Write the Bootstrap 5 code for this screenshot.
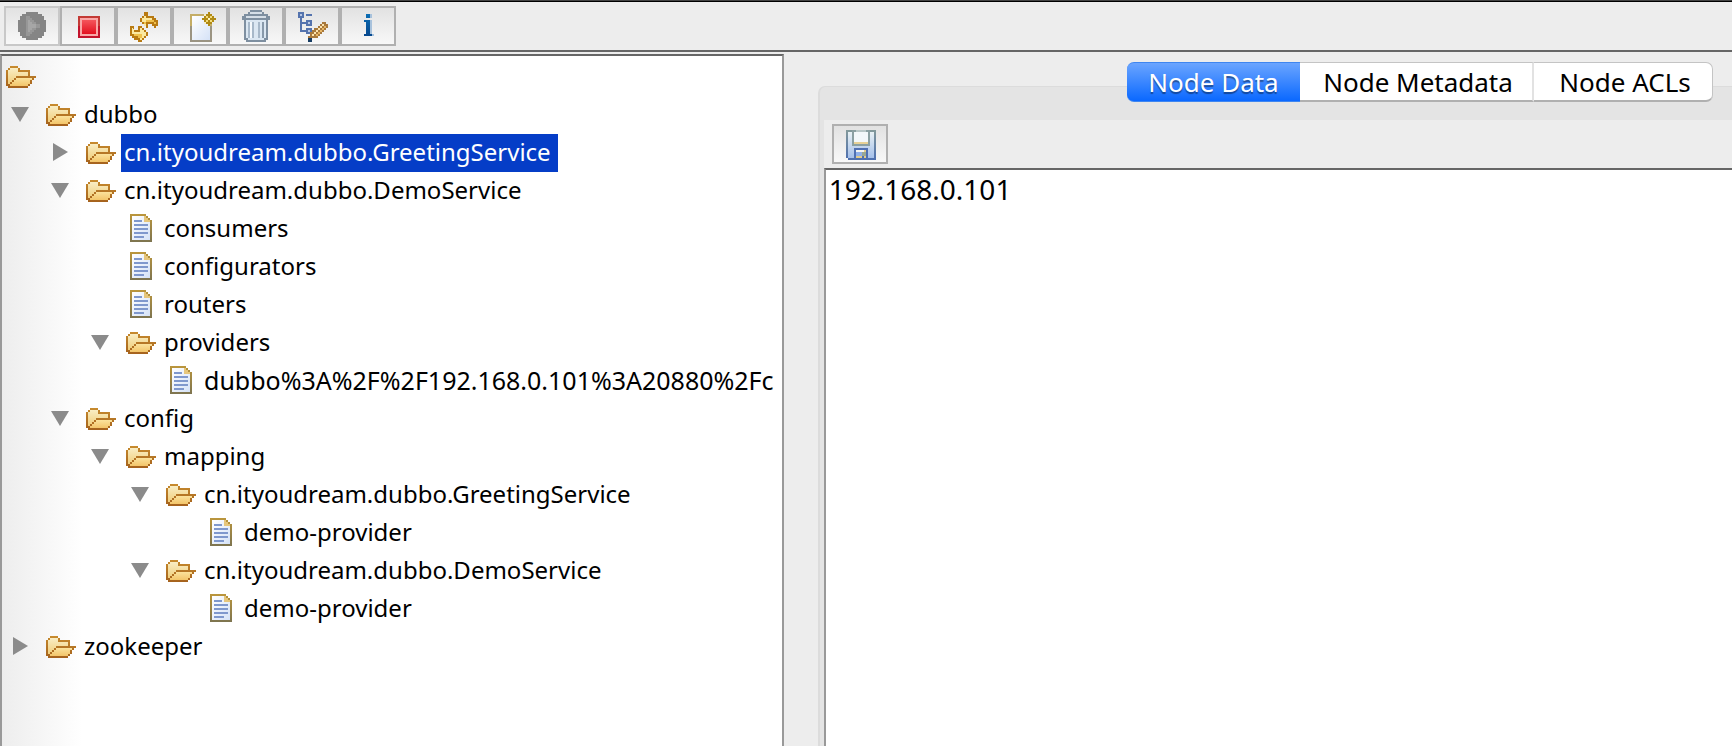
<!DOCTYPE html>
<html lang="en">
<head>
<meta charset="utf-8">
<meta name="viewport" content="width=device-width, initial-scale=1">
<title>ZooInspector</title>
<link href="https://cdn.jsdelivr.net/npm/bootstrap@5.3.0/dist/css/bootstrap.min.css" rel="stylesheet">
<style>
  body { font-family: "Noto Sans", "Open Sans", sans-serif; font-size: 24px; line-height: 38px; color: #000; background: #ededed; }
  .topbar { border-top: 1px solid #444; border-bottom: 2px solid #666; background: #ededed; box-shadow: inset 0 1px 0 #000; padding: 5px 4px 4px; }
  .tool { width: 56px; height: 40px; padding: 0; border: 2px solid #b0b0b0; border-radius: 0; background: linear-gradient(#e2e2e2, #f8f8f8); }
  .tool:disabled { border-color: #c8c8c8; opacity: 1; }
  .px { width: 32px; height: 32px; display: block; flex: none; shape-rendering: crispEdges; }
  .main-split { padding-top: 2px; }
  .tree-pane { flex: 0 0 45.25%; border: 2px solid #999; border-top-color: #666; border-bottom: 0; background: linear-gradient(90deg, #ededed, #fff 80px); padding: 2px 2px 0 4px; }
  .tree-pane ul { list-style: none; margin: 0; padding: 0; }
  .tree-pane li ul { padding-left: 40px; }
  .node { height: 38px; }
  .node .px { margin: 2px 3px 4px 0; }
  .toggle { flex: none; width: 40px; height: 38px; padding: 0 0 0 5px; border: 0; background: none; }
  .toggle svg { display: block; width: 22px; height: 20px; }
  .caption { padding: 0 7px 0 3px; line-height: 36px; white-space: nowrap; }
  .caption.selected { background: #053dc7; color: #fff; }
  .caption.encoded { padding-right: 0; font-size: 25px; }
  .divider { flex: 0 0 34px; }
  .tab-pane-box { margin-top: 32px; border: 2px solid #dcdcdc; border-width: 1px 0 0 2px; border-radius: 7px 0 0 0; background: #e4e4e4; padding-left: 4px; }
  .tabs { margin: -25px 19px 18px 0; }
  .tabs .nav-link { height: 40px; padding: 0; font-size: 26px; line-height: 38px; color: #000; background: #fff; border: 1px solid #c4c4c4; border-bottom: 2px solid #b0b0b0; border-left: 0; border-radius: 0; white-space: nowrap; }
  .tabs .nav-link.active { width: 173px; color: #fff; text-shadow: 0 2px 1px #0006; background: linear-gradient(#6ba5ff, #0a68ff); border: 1px solid #3f86f0; border-width: 1px 0; border-radius: 7px 0 0 7px; }
  .tabs .wide { width: 234px; padding-left: 4px; border-right: 2px solid #e2e2e2; }
  .tabs .last { width: 179px; padding-left: 4px; border-radius: 0 7px 7px 0; }
  .data-bar { background: #ededed; padding: 4px 8px; }
  .data-text { border: 0; border-top: 2px solid #666; border-left: 2px solid #999; border-radius: 0; padding: 0 3px; font-size: 28px; line-height: 38px; color: #000; resize: none; background: #fff; }
  .data-text:focus { box-shadow: none; border-color: #666; }
</style>
</head>
<body class="vh-100 d-flex flex-column overflow-hidden">

<svg class="position-absolute" width="0" height="0" aria-hidden="true">
  <defs>
    <linearGradient id="gFold" x1="0" y1="0" x2="0" y2="1"><stop offset="0" stop-color="#f9edc4"/><stop offset="1" stop-color="#f0cb72"/></linearGradient>
    <linearGradient id="gFlap" x1="0" y1="0" x2="0" y2="1"><stop offset="0" stop-color="#fbe29c"/><stop offset="1" stop-color="#f3c56a"/></linearGradient>
    <linearGradient id="gEdge" x1="0" y1="0" x2="0" y2="1"><stop offset="0" stop-color="#c78b2e"/><stop offset="1" stop-color="#a5621d"/></linearGradient>
    <linearGradient id="gDocEdge" x1="0" y1="0" x2="0" y2="1"><stop offset="0" stop-color="#bb963c"/><stop offset="1" stop-color="#7d7450"/></linearGradient>
    <linearGradient id="gPage" x1="0" y1="0" x2="1" y2="1"><stop offset="0" stop-color="#fff"/><stop offset="1" stop-color="#d5e2f7"/></linearGradient>
    <linearGradient id="gRed" x1="0" y1="0" x2="0" y2="1"><stop offset="0" stop-color="#f4555c"/><stop offset="1" stop-color="#e3101f"/></linearGradient>
    <linearGradient id="gBlue" x1="0" y1="0" x2="0" y2="1"><stop offset="0" stop-color="#0b6db4"/><stop offset="1" stop-color="#06478d"/></linearGradient>
    <linearGradient id="gDisk" x1="0" y1="0" x2="0" y2="1"><stop offset="0" stop-color="#e8f1f4"/><stop offset="1" stop-color="#a5c0ea"/></linearGradient>
    <linearGradient id="gDiskEdge" x1="0" y1="0" x2="0" y2="1"><stop offset="0" stop-color="#849a9b"/><stop offset="1" stop-color="#4d6fb0"/></linearGradient>
    <symbol id="folder" viewBox="0 0 16 16">
      <path fill="url(#gFold)" d="M2 4h4v1h1v1h4v3H5v1H4v1H3v1H2v1H1V5h1z"/>
      <path fill="url(#gFlap)" d="M5 9h9v1h-1v1h-1v1h-1v1H2v-1h1v-1h1v-1h1z"/>
      <path fill="url(#gEdge)" d="M2 3h4v1H2zM1 4h1v1H1zM6 4h1v1H6zM0 5h1v8H0zM6 5h6v3h-1V6H6zM5 8h10v1h-1v1h-1V9H5zM4 9h1v1H4zM3 10h1v1H3zM12 10h1v1h-1zM2 11h1v1H2zM12 11h1v1h-1zM1 12h1v1H1zM11 12h1v1h-1zM1 13h10v1H1z"/>
    </symbol>
    <symbol id="doc" viewBox="0 0 16 16">
      <path fill="url(#gDocEdge)" d="M2 1h8v1h1v1h1v1h1v11H2z"/>
      <path fill="url(#gPage)" d="M3 2h6v3h3v9H3z"/>
      <path fill="#e6c67c" d="M9 2h1v1h1v1h1v1H9z"/>
      <path fill="#7f98cd" d="M4 4h4v1H4zM4 6h7v1H4zM4 8h7v1H4zM4 10h7v1H4zM4 12h5v1H4z"/>
    </symbol>
    <symbol id="down" viewBox="0 0 22 20"><path fill="#8b8b8b" d="M0 2h18L9 17z"/></symbol>
    <symbol id="right" viewBox="0 0 22 20"><path fill="#8b8b8b" d="M2 0l15 9-15 9z"/></symbol>
  </defs>
</svg>

<header class="topbar d-flex" role="toolbar" aria-label="Main toolbar">
  <button class="tool btn d-flex justify-content-center align-items-center" type="button" disabled aria-label="Connect">
    <svg class="px" viewBox="0 0 16 16"><path fill="#858585" d="M5 1h6v1h2v1h1v2h1v6h-1v2h-1v1h-2v1H5v-1H3v-1H2v-2H1V5h1V3h1V2h2z"/><path fill="#979797" d="M5 3h2v1h1v1h1v1h1v1h2v2h-2v1H9v1H8v1H7v1H5z"/><path fill="#a6a6a6" d="M6 5h1v1h1v1h2v2H8v1H7v1H6z"/></svg>
  </button>
  <button class="tool btn d-flex justify-content-center align-items-center" type="button" aria-label="Disconnect">
    <svg class="px" viewBox="0 0 16 16"><path fill="#c33a35" d="M3 3h11v5H3z"/><path fill="#c3132c" d="M3 8h11v6H3z"/><path fill="#f9a6a6" d="M4 4h9v9H4z"/><path fill="url(#gRed)" d="M5 5h7v7H5z"/></svg>
  </button>
  <button class="tool btn d-flex justify-content-center align-items-center" type="button" aria-label="Refresh">
    <svg class="px" viewBox="0 0 16 16">
      <path fill="#b87a12" d="M8 1h2v2h3v1h1v1h1v3h-1v1h-1V8h-1V7h-2v2H9V8H8V7H7V6H6V4h1V3h1z"/>
      <path fill="#fbe9a0" d="M8 3h1V2h0v2h3v1h1v1h1v1h-1V6H9v2H8V6H7V4h1z"/>
      <path fill="#efc14c" d="M9 5h4v1H9zM8 6h1v1H8zM13 6h1v1h-1z"/>
      <path fill="#b87a12" d="M1 8h2v2h2V8h2v1h1v1h1v1h1v2H9v1H8v1H7v1H5v-1H3v-1H2v-1H1z"/>
      <path fill="#fbe9a0" d="M2 9v3h1v1h3v2h1v-1h1v-1h1v-2H8v-1H7V9H6v2H3v-1z"/>
      <path fill="#efc14c" d="M3 12h4v1H3zM5 13h2v1H5z"/>
    </svg>
  </button>
  <button class="tool btn d-flex justify-content-center align-items-center" type="button" aria-label="Add node">
    <svg class="px" viewBox="0 0 16 16"><path fill="#c4ad66" d="M3 2h11v6H3z"/><path fill="#9b9482" d="M3 8h11v8H3z"/><path fill="url(#gPage)" d="M4 3h9v12H4z"/><path fill="#f5edcd" d="M10 2h4v5h-4z"/><path fill="#b08a14" d="M12 1h1v2h1v1h2v1h-2v1h-1v2h-1V6h-1V5H9V4h2V3h1z"/><path fill="#fff7c0" d="M12 4h1v1h-1z"/><path fill="#b08a14" d="M10 3h1v1h-1zM11 2h1v1h-1zM13 2h1v1h-1zM14 3h1v1h-1zM10 5h1v1h-1zM11 6h1v1h-1zM13 6h1v1h-1zM14 5h1v1h-1z"/><path fill="#f3dc7c" d="M11 3h1v1h-1zM13 3h1v1h-1zM11 5h1v1h-1zM13 5h1v1h-1z"/></svg>
  </button>
  <button class="tool btn d-flex justify-content-center align-items-center" type="button" aria-label="Delete node">
    <svg class="px" viewBox="0 0 16 16"><path fill="#7e8fa0" d="M5 0h6v1h1v1h2v1h1v2h-1v10h-1v1H3v-1H2V5H1V3h1V2h2V1h1z"/><path fill="#d5dee7" d="M5 1h6v1H5zM3 3h10v1H3z"/><path fill="#dbe7f2" d="M3 5h10v9h-1v1H4v-1H3z"/><path fill="#a7b8c9" d="M4 6h1v8H4zM6 6h1v8H6zM9 6h1v8H9zM11 6h1v8h-1z"/><path fill="#f5f9fc" d="M5 6h1v8H5z"/><path fill="#8899aa" d="M11 6h1v8h-1z"/></svg>
  </button>
  <button class="tool btn d-flex justify-content-center align-items-center" type="button" aria-label="Node viewers">
    <svg class="px" viewBox="0 0 16 16"><path fill="#5473ae" d="M1 1h3v3H1zM5 2h3v1H5zM2 4h1v7H2zM3 6h2v1H3zM5 5h3v3H5zM3 10h2v1H3zM5 9h3v3H5z"/><path fill="#b8c8e4" d="M2 2h1v1H2zM6 6h1v1H6zM6 10h1v1H6z"/><path fill="#a8793c" d="M13 6h2v1h1v2h-1v1h-1v1h-1v1h-1v1h-1v1H8v1H6v-2h1v-2h1v-1h1v-1h1V9h1V8h1V7h1z"/><path fill="#fbe4b0" d="M13 7h1v1h-1v1h-1v1h-1v1h-1v1H9v1H8v-1h1v-1h1v-1h1V9h1V8h1z"/><path fill="#e9b765" d="M14 8h1v1h-1v1h-1v1h-1v1h-1v1h-1v-1h1v-1h1v-1h1V9h1z"/><path fill="#163c63" d="M6 14h2v2H6z"/></svg>
  </button>
  <button class="tool btn d-flex justify-content-center align-items-center" type="button" aria-label="About">
    <svg class="px" viewBox="0 0 16 16"><path fill="#a8c2dc" d="M9 2h1v2H9zM9 5h1v7h1v1H9z"/><path fill="url(#gBlue)" d="M7 2h2v2H7zM6 5h3v7h1v1H6v-1h1V6H6z"/></svg>
  </button>
</header>

<main class="main-split d-flex flex-grow-1 overflow-hidden">
  <nav class="tree-pane overflow-hidden" aria-label="Nodes">
    <div class="node d-flex"><svg class="px"><use href="#folder"/></svg></div>
    <ul>
      <li>
        <div class="node d-flex"><button class="toggle d-flex align-items-center" type="button" aria-label="Collapse"><svg><use href="#down"/></svg></button><svg class="px"><use href="#folder"/></svg><span class="caption">dubbo</span></div>
        <ul>
          <li><div class="node d-flex"><button class="toggle d-flex align-items-center" type="button" aria-label="Expand"><svg><use href="#right"/></svg></button><svg class="px"><use href="#folder"/></svg><span class="caption selected">cn.ityoudream.dubbo.GreetingService</span></div></li>
          <li>
            <div class="node d-flex"><button class="toggle d-flex align-items-center" type="button" aria-label="Collapse"><svg><use href="#down"/></svg></button><svg class="px"><use href="#folder"/></svg><span class="caption">cn.ityoudream.dubbo.DemoService</span></div>
            <ul>
              <li><div class="node d-flex"><span class="toggle"></span><svg class="px"><use href="#doc"/></svg><span class="caption">consumers</span></div></li>
              <li><div class="node d-flex"><span class="toggle"></span><svg class="px"><use href="#doc"/></svg><span class="caption">configurators</span></div></li>
              <li><div class="node d-flex"><span class="toggle"></span><svg class="px"><use href="#doc"/></svg><span class="caption">routers</span></div></li>
              <li>
                <div class="node d-flex"><button class="toggle d-flex align-items-center" type="button" aria-label="Collapse"><svg><use href="#down"/></svg></button><svg class="px"><use href="#folder"/></svg><span class="caption">providers</span></div>
                <ul>
                  <li><div class="node d-flex"><span class="toggle"></span><svg class="px"><use href="#doc"/></svg><span class="caption encoded">dubbo%3A%2F%2F192.168.0.101%3A20880%2Fc</span></div></li>
                </ul>
              </li>
            </ul>
          </li>
          <li>
            <div class="node d-flex"><button class="toggle d-flex align-items-center" type="button" aria-label="Collapse"><svg><use href="#down"/></svg></button><svg class="px"><use href="#folder"/></svg><span class="caption">config</span></div>
            <ul>
              <li>
                <div class="node d-flex"><button class="toggle d-flex align-items-center" type="button" aria-label="Collapse"><svg><use href="#down"/></svg></button><svg class="px"><use href="#folder"/></svg><span class="caption">mapping</span></div>
                <ul>
                  <li>
                    <div class="node d-flex"><button class="toggle d-flex align-items-center" type="button" aria-label="Collapse"><svg><use href="#down"/></svg></button><svg class="px"><use href="#folder"/></svg><span class="caption">cn.ityoudream.dubbo.GreetingService</span></div>
                    <ul><li><div class="node d-flex"><span class="toggle"></span><svg class="px"><use href="#doc"/></svg><span class="caption">demo-provider</span></div></li></ul>
                  </li>
                  <li>
                    <div class="node d-flex"><button class="toggle d-flex align-items-center" type="button" aria-label="Collapse"><svg><use href="#down"/></svg></button><svg class="px"><use href="#folder"/></svg><span class="caption">cn.ityoudream.dubbo.DemoService</span></div>
                    <ul><li><div class="node d-flex"><span class="toggle"></span><svg class="px"><use href="#doc"/></svg><span class="caption">demo-provider</span></div></li></ul>
                  </li>
                </ul>
              </li>
            </ul>
          </li>
        </ul>
      </li>
      <li><div class="node d-flex"><button class="toggle d-flex align-items-center" type="button" aria-label="Expand"><svg><use href="#right"/></svg></button><svg class="px"><use href="#folder"/></svg><span class="caption">zookeeper</span></div></li>
    </ul>
  </nav>
  <div class="divider"></div>
  <section class="tab-pane-box d-flex flex-column flex-grow-1">
    <div class="tabs nav flex-nowrap justify-content-end" role="tablist">
      <button class="nav-link active" type="button" role="tab" aria-selected="true">Node Data</button>
      <button class="nav-link wide" type="button" role="tab" aria-selected="false">Node Metadata</button>
      <button class="nav-link last" type="button" role="tab" aria-selected="false">Node ACLs</button>
    </div>
    <div class="data-bar">
      <button class="tool btn d-flex justify-content-center align-items-center" type="button" aria-label="Save">
        <svg class="px" viewBox="0 0 16 16"><path fill="url(#gDiskEdge)" d="M1 1h15v15H2v-1H1z"/><path fill="url(#gDisk)" d="M2 2h13v13H2z"/><path fill="#8ba0a2" d="M4 1h9v8H4z"/><path fill="#f3f8fa" d="M5 2h7v5H5z"/><path fill="#b9c7c7" d="M6 1h5v1H6z"/><path fill="#e7d195" d="M5 7h7v1H5z"/><path fill="#4f70b2" d="M5 10h7v5H5z"/><path fill="#f5f5f2" d="M6 11h4v1H6z"/><path fill="#8fb0ea" d="M6 12h3v2H6z"/><path fill="#e2cc8c" d="M6 14h3v1H6zM10 11h1v1h-1zM10 14h1v1h-1z"/><path fill="#9aa893" d="M9 12h2v2H9z"/></svg>
      </button>
    </div>
    <textarea class="data-text form-control flex-grow-1" aria-label="Node data" spellcheck="false">192.168.0.101</textarea>
  </section>
</main>
<script src="https://cdn.jsdelivr.net/npm/bootstrap@5.3.0/dist/js/bootstrap.bundle.min.js"></script>
</body>
</html>
